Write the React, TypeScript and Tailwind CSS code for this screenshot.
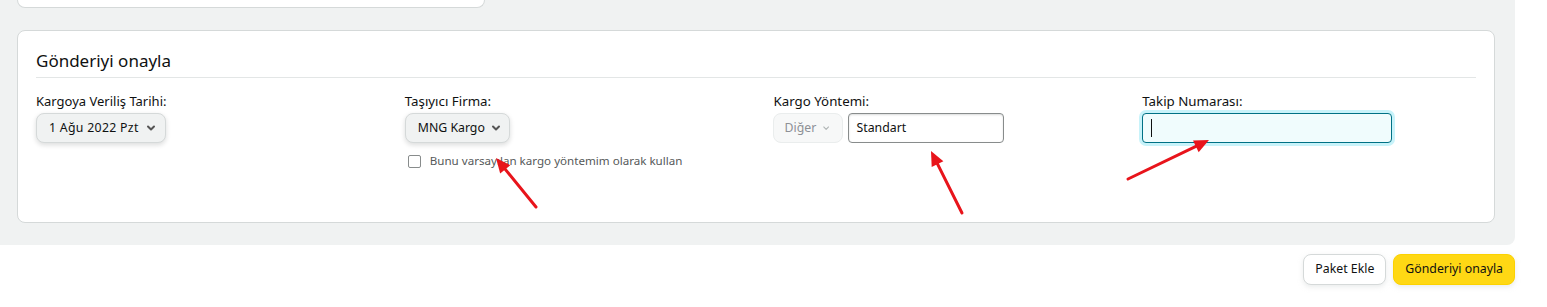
import { ChevronDown } from 'lucide-react'

function Arrow({ x1, y1, x2, y2 }: { x1: number; y1: number; x2: number; y2: number }) {
  const a = Math.atan2(y2 - y1, x2 - x1)
  const len = 16
  const w = 0.42
  const p1 = [x2 - len * Math.cos(a - w), y2 - len * Math.sin(a - w)]
  const p2 = [x2 - len * Math.cos(a + w), y2 - len * Math.sin(a + w)]
  const bx = x2 - len * 0.8 * Math.cos(a)
  const by = y2 - len * 0.8 * Math.sin(a)
  return (
    <g>
      <line x1={x1} y1={y1} x2={bx} y2={by} stroke="#e8141b" strokeWidth={3} strokeLinecap="round" />
      <polygon points={`${x2},${y2} ${p1[0]},${p1[1]} ${p2[0]},${p2[1]}`} fill="#e8141b" />
    </g>
  )
}

export default function App() {
  return (
    <div
      className="relative w-[1547px] h-[307px] bg-white text-[#0f1111]"
      style={{ fontFamily: '"Noto Sans", "Open Sans", Arial, sans-serif' }}
    >
      <div className="w-[1515px] h-[245px] bg-[#f0f2f2] rounded-br-lg px-[17px]">
        <div className="w-[468px] h-[8px] bg-white border border-t-0 border-[#d5d9d9] rounded-b-lg" />

        <div className="mt-[22px] w-[1478px] h-[193px] bg-white border border-[#d5d9d9] rounded-lg px-[18px] pt-[18px]">
          <h2 className="text-[17px] leading-[24px] pb-[4px] border-b border-[#e3e6e6]">Gönderiyi onayla</h2>

          <div className="grid grid-cols-4 gap-x-[35px] mt-[14px] text-[12.3px]">
            <div>
              <div className="leading-[18px] text-[13px]">Kargoya Veriliş Tarihi:</div>
              <button className="mt-[3px] h-[30px] pl-[12px] pr-[8px] flex items-center gap-[6px] bg-[#f0f2f2] border border-[#d5d9d9] rounded-lg shadow-[0_2px_5px_rgba(15,17,17,0.15)]">
                <span className="tracking-[0.3px]">1 Ağu 2022 Pzt</span>
                <ChevronDown className="w-[12px] h-[12px] text-[#555]" strokeWidth={4} />
              </button>
            </div>

            <div>
              <div className="leading-[18px] text-[13.3px]">Taşıyıcı Firma:</div>
              <button className="mt-[3px] h-[30px] pl-[12px] pr-[7px] flex items-center gap-[5px] bg-[#f0f2f2] border border-[#d5d9d9] rounded-lg shadow-[0_2px_5px_rgba(15,17,17,0.15)]">
                <span>MNG Kargo</span>
                <ChevronDown className="w-[12px] h-[12px] text-[#555]" strokeWidth={4} />
              </button>
              <label className="mt-[10px] flex items-center gap-[9px] text-[11.6px] leading-[16px] text-[#565959] ml-[3px]">
                <span className="w-[13px] h-[13px] border border-[#888c8c] rounded-[2px] bg-white" />
                Bunu varsayılan kargo yöntemim olarak kullan
              </label>
            </div>

            <div>
              <div className="leading-[18px] text-[13.3px]">Kargo Yöntemi:</div>
              <div className="mt-[3px] flex items-center gap-[5px] -ml-[1px]">
                <div className="h-[30px] w-[70px] px-[11px] flex items-center gap-[6px] bg-[#f7f8f8] border border-[#eaeded] rounded-lg text-[#8d9096]">
                  <span>Diğer</span>
                  <svg width="12" height="12" viewBox="0 0 12 12" fill="none">
                    <path d="M2.5 4.5 L6 8 L9.5 4.5" stroke="#aeb3b3" strokeWidth="1.6" strokeLinecap="round" strokeLinejoin="round" />
                  </svg>
                </div>
                <div className="h-[30px] w-[156px] px-[8px] flex items-center border border-[#888c8c] rounded-[4px] shadow-[inset_0_1px_2px_rgba(15,17,17,0.15)]">
                  Standart
                </div>
              </div>
            </div>

            <div>
              <div className="leading-[18px] text-[13.3px]">Takip Numarası:</div>
              <div className="mt-[3px] h-[30px] w-[250px] px-[8px] flex items-center bg-[#f0fcfd] border border-[#007185] rounded-[4px] shadow-[0_0_0_3px_#c8f3fa]">
                <span className="w-px h-[18px] bg-[#0f1111]" />
              </div>
            </div>
          </div>
        </div>
      </div>

      <div className="flex justify-end gap-[7px] w-[1515px] mt-[9px]">
        <button className="h-[31px] px-[11px] text-[12.3px] bg-white border border-[#d5d9d9] rounded-lg shadow-[0_2px_5px_rgba(213,217,217,0.5)]">
          Paket Ekle
        </button>
        <button className="h-[31px] px-[11px] text-[12.3px] bg-[#ffd814] border border-[#fcd200] rounded-lg shadow-[0_2px_5px_rgba(213,217,217,0.5)]">
          Gönderiyi onayla
        </button>
      </div>

      <svg className="absolute inset-0 pointer-events-none" width={1547} height={307}>
        <Arrow x1={536} y1={207} x2={496} y2={158} />
        <Arrow x1={962} y1={213} x2={931} y2={151} />
        <Arrow x1={1128} y1={179} x2={1209} y2={140} />
      </svg>
    </div>
  )
}
